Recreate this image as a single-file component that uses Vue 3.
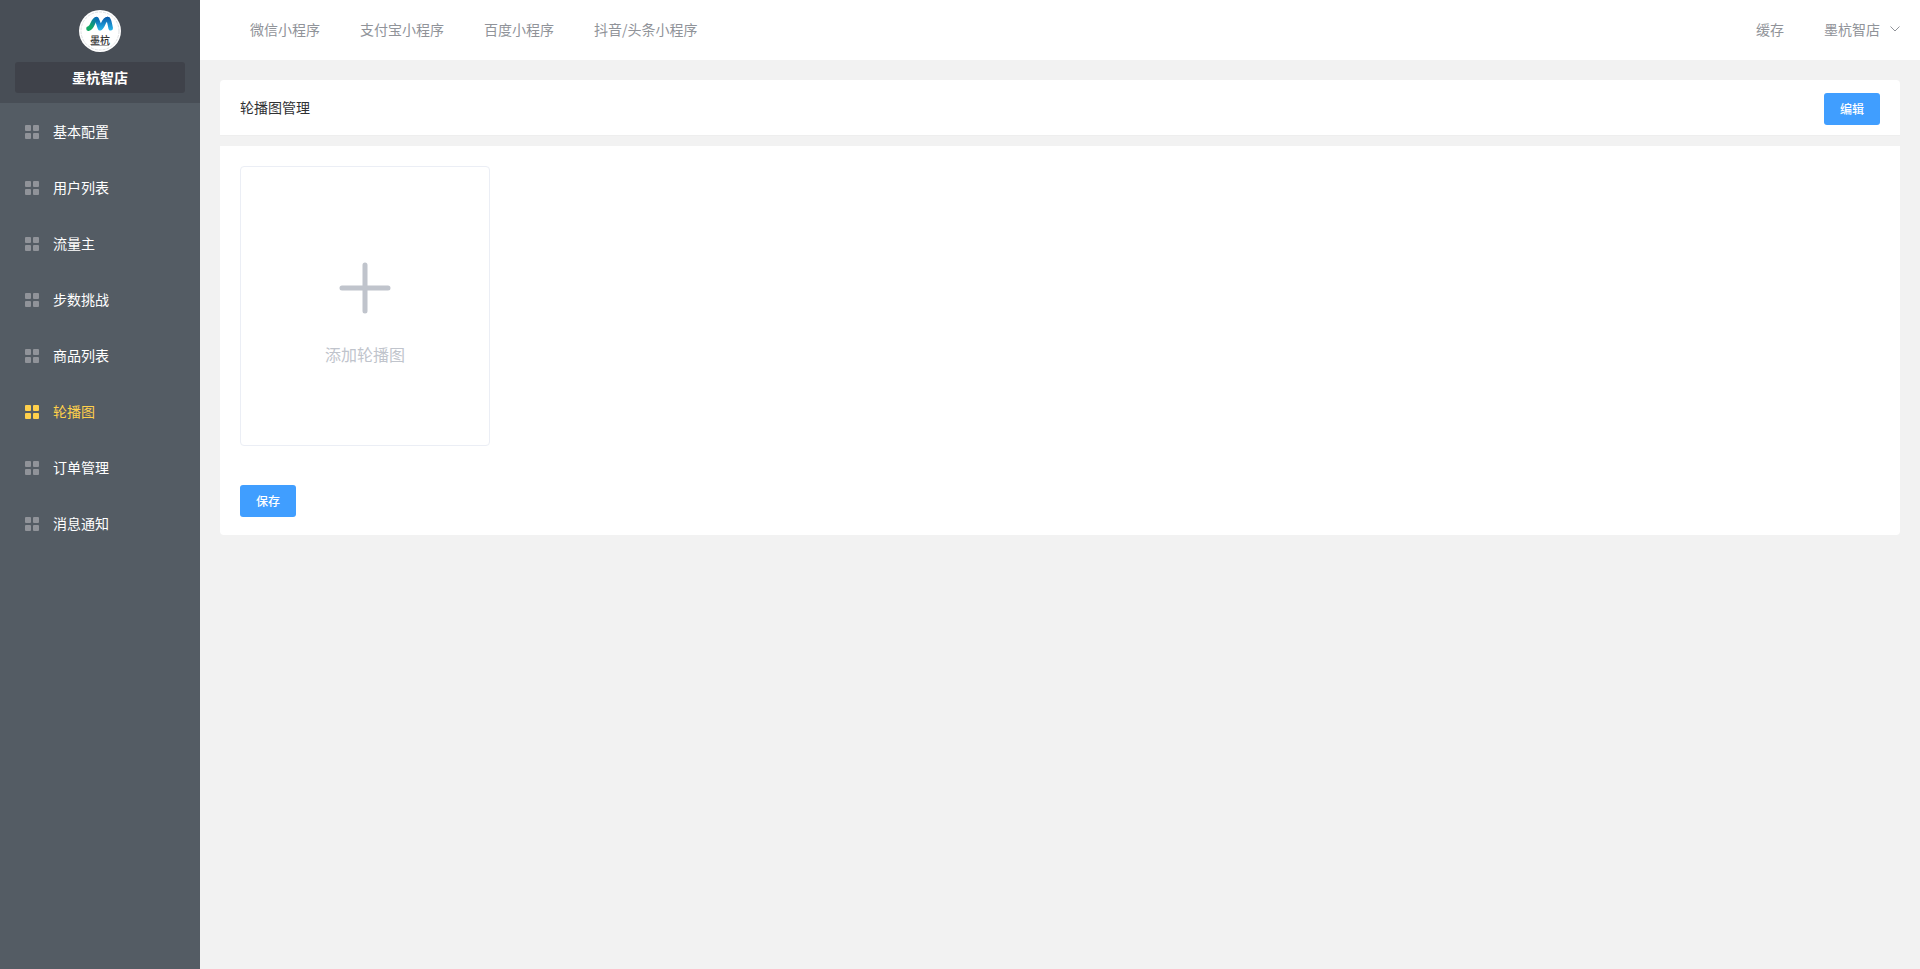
<script setup>
import { ref } from 'vue'

const platforms = ['微信小程序', '支付宝小程序', '百度小程序', '抖音/头条小程序']
const menu = ['基本配置', '用户列表', '流量主', '步数挑战', '商品列表', '轮播图', '订单管理', '消息通知']
const active = ref('轮播图')
</script>

<template>
  <div class="layout">
    <aside class="sidebar">
      <div class="brand">
        <div class="avatar">
          <svg class="logo" viewBox="0 0 42 26" aria-hidden="true">
            <defs>
              <linearGradient id="logo-left" gradientUnits="userSpaceOnUse" x1="8" y1="20" x2="19" y2="8">
                <stop offset="0.3" stop-color="#12a866" />
                <stop offset="0.9" stop-color="#0a6fb4" />
              </linearGradient>
              <linearGradient id="logo-mid" gradientUnits="userSpaceOnUse" x1="0" y1="7" x2="0" y2="20">
                <stop offset="0" stop-color="#0858a8" />
                <stop offset="1" stop-color="#27b4e8" />
              </linearGradient>
            </defs>
            <circle cx="21" cy="21" r="19" fill="none" stroke="#d5d8db" stroke-width="0.8" stroke-dasharray="3 1" />
            <g fill="none" stroke-width="4.600" stroke-linecap="round" stroke-linejoin="round">
              <path d="M28.500 9c1.200 0 1.700 2 3.200 9.200" stroke="url(#logo-mid)" />
              <path d="M17.500 9.200c1.200 1 1.800 4.500 3.500 9 3-.7 3.500-9.200 7.500-9.200" stroke="url(#logo-mid)" />
              <path d="M9.500 18.600c4.500-.6 4-9.400 8-9.400" stroke="url(#logo-left)" />
            </g>
          </svg>
          <span class="logo-name">墨杭</span>
          <span class="logo-line"></span>
        </div>
        <div class="brand-name">墨杭智店</div>
      </div>
      <nav class="menu">
        <a v-for="item in menu" :key="item" href="#" class="menu-item" :class="{ active: item === active }" @click.prevent="active = item">
          <svg class="grid-icon" viewBox="0 0 14 14" aria-hidden="true">
            <rect width="6" height="6" rx="1" />
            <rect x="8" width="6" height="6" rx="1" />
            <rect y="8" width="6" height="6" rx="1" />
            <rect x="8" y="8" width="6" height="6" rx="1" />
          </svg>
          <span>{{ item }}</span>
        </a>
      </nav>
    </aside>

    <div class="content">
      <header class="topbar">
        <nav class="links">
          <a v-for="name in platforms" :key="name" href="#">{{ name }}</a>
        </nav>
        <div class="links">
          <a href="#">缓存</a>
          <button type="button" class="account">
            <span>墨杭智店</span>
            <svg class="arrow" viewBox="0 0 10 6" aria-hidden="true">
              <path d="M.5.5 5 5 9.500.5" />
            </svg>
          </button>
        </div>
      </header>

      <main class="main">
        <section class="card title-card">
          <h1>轮播图管理</h1>
          <button type="button" class="primary">编辑</button>
        </section>
        <section class="card body-card">
          <button type="button" class="add-box">
            <svg class="plus" viewBox="0 0 52 52" aria-hidden="true">
              <path d="M26 3v46M3 26h46" />
            </svg>
            <span>添加轮播图</span>
          </button>
          <button type="button" class="primary">保存</button>
        </section>
      </main>
    </div>
  </div>
</template>

<style>
body {
  margin: 0;
  background: #f2f2f2;
}
</style>

<style scoped>
.layout {
  display: flex;
  min-height: 100vh;
  font-family: "Noto Sans CJK SC", sans-serif;
  font-size: 14px;
  line-height: 20px;
  color: #303133;
}

.layout * {
  box-sizing: border-box;
}

a {
  color: inherit;
  text-decoration: none;
}

button {
  font-family: inherit;
  cursor: pointer;
}

.sidebar {
  flex: none;
  width: 200px;
  background: #545c64;
}

.brand {
  display: flex;
  flex-direction: column;
  align-items: center;
  gap: 10px;
  padding: 10px 15px;
  background: #484e56;
}

.avatar {
  display: flex;
  flex-direction: column;
  align-items: center;
  width: 42px;
  height: 42px;
  border-radius: 50%;
  background: #fff;
  overflow: hidden;
}

.logo {
  flex: none;
  width: 42px;
  height: 26px;
  overflow: visible;
}

.logo-name {
  font-size: 10px;
  line-height: 8px;
  font-weight: 500;
  color: #333;
}

.logo-line {
  width: 18px;
  height: 1px;
  margin-top: 1px;
  background: #aaa;
}

.brand-name {
  align-self: stretch;
  padding: 5px 0 6px;
  border-radius: 3px;
  background: #3f424a;
  color: #fff;
  font-weight: 700;
  text-align: center;
}

.menu-item {
  display: flex;
  align-items: center;
  gap: 14px;
  height: 56px;
  padding: 1px 25px 0;
  color: #fff;
}

.menu-item span {
  padding-bottom: 2px;
}

.grid-icon {
  width: 14px;
  height: 14px;
  fill: #909399;
}

.menu-item.active {
  color: #ffd04b;
}

.active .grid-icon {
  fill: #ffd04b;
}

.content {
  flex: 1;
  min-width: 0;
}

.topbar {
  display: flex;
  align-items: center;
  justify-content: space-between;
  height: 60px;
  padding: 0 20px 2px 50px;
  background: #fff;
  color: #909399;
}

.links {
  display: flex;
  align-items: center;
  gap: 40px;
}

.account {
  display: flex;
  align-items: center;
  gap: 10px;
  padding: 0;
  border: 0;
  background: none;
  color: inherit;
  font-size: 14px;
  line-height: 20px;
}

.arrow {
  width: 10px;
  height: 6px;
  fill: none;
  stroke: #909399;
}

.main {
  display: flex;
  flex-direction: column;
  gap: 11px;
  padding: 20px;
}

.card {
  background: #fff;
}

.title-card {
  display: flex;
  align-items: center;
  justify-content: space-between;
  padding: 13px 20px 10px;
  border-radius: 4px 4px 0 0;
  box-shadow: 0 1px 0 #eee;
}

h1 {
  margin: 0;
  padding-bottom: 4px;
  font-size: 14px;
  line-height: 20px;
  font-weight: 400;
}

.body-card {
  display: flex;
  flex-direction: column;
  align-items: flex-start;
  gap: 39px;
  padding: 20px 20px 18px;
  border-radius: 0 0 4px 4px;
}

.primary {
  width: 56px;
  height: 32px;
  padding: 0 0 2px;
  border: 0;
  border-radius: 3px;
  background: #409eff;
  color: #fff;
  font-size: 12px;
  font-weight: 500;
}

.add-box {
  display: flex;
  flex-direction: column;
  align-items: center;
  justify-content: center;
  gap: 28px;
  width: 250px;
  height: 280px;
  padding: 16px 0 0;
  border: 1px solid #ebeef5;
  border-radius: 4px;
  background: #fff;
  color: #c0c4cc;
  font-size: 16px;
  line-height: 24px;
}

.plus {
  width: 52px;
  height: 52px;
  fill: none;
  stroke: #c0c4cc;
  stroke-width: 5;
  stroke-linecap: round;
}
</style>
